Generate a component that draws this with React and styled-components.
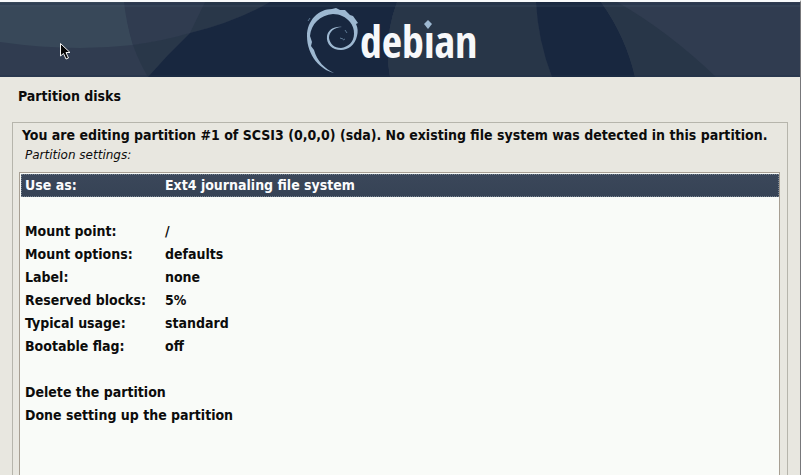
import React, { useState } from "react";
import styled, { createGlobalStyle } from "styled-components";

const GlobalStyle = createGlobalStyle`
  *, *::before, *::after { box-sizing: border-box; }
  body {
    margin: 0;
    overflow: hidden;
    background: #e8e7e0;
    color: #0c0c0c;
    font: 14px/23px "DejaVu Sans Condensed", "DejaVu Sans", sans-serif;
  }
`;

const Page = styled.main`
  display: flex;
  flex-direction: column;
  height: 100vh;
  border-top: 2px solid #f8fafb;
  border-right: 1px solid #77777a;
`;

const Banner = styled.header`
  flex: none;
  height: 75px;
  background: #2f3b4e;
  overflow: hidden;
`;

const BannerArt = styled.svg`
  display: block;
  width: 100%;
  height: 100%;
`;

const Wordmark = styled.text`
  font: bold 44px "Open Sans Condensed", "Roboto Condensed", Lato, sans-serif;
  fill: #f7f8fa;
`;

const Title = styled.h1`
  flex: none;
  margin: 0;
  padding: 8px 18px 14px;
  font-size: 14px;
  line-height: 23px;
`;

const Panel = styled.section`
  flex: 1;
  min-height: 0;
  display: flex;
  flex-direction: column;
  margin: 0 12px;
  padding: 2px 7px 0 6px;
  border: 1px solid #b6b5ac;
  border-bottom: 0;
`;

const Message = styled.h2`
  margin: 0 3px;
  font-size: 14px;
  line-height: 21px;
  white-space: nowrap;
`;

const ListLabel = styled.p`
  margin: 0 6px 8px;
  font-family: "DejaVu Sans", sans-serif;
  font-style: italic;
  font-size: 12px;
  line-height: 18px;
`;

const SettingsList = styled.div`
  flex: 1;
  min-height: 0;
  overflow: hidden;
  padding: 1px 0 0 1px;
  background: #f9fbf8;
  border: 1px solid #a79f93;
  border-bottom: 0;
`;

const SettingRow = styled.button`
  display: grid;
  grid-template-columns: ${({ $wide }) => ($wide ? "1fr" : "140px 1fr")};
  align-items: center;
  width: 100%;
  height: 23px;
  padding: 0 4px;
  border: 0;
  background: ${({ $selected }) =>
    $selected ? "linear-gradient(#3b475a, #364355)" : "transparent"};
  color: ${({ $selected }) => ($selected ? "#fbfcfd" : "#0c0c0c")};
  outline: ${({ $selected }) => ($selected ? "1px dotted #76828f" : "none")};
  outline-offset: -1px;
  font: bold 14px/23px "DejaVu Sans Condensed", "DejaVu Sans", sans-serif;
  text-align: left;
  white-space: nowrap;
`;

const Spacer = styled.div`
  height: 23px;
`;

const rows = [
  { name: "Use as:", value: "Ext4 journaling file system" },
  null,
  { name: "Mount point:", value: "/" },
  { name: "Mount options:", value: "defaults" },
  { name: "Label:", value: "none" },
  { name: "Reserved blocks:", value: "5%" },
  { name: "Typical usage:", value: "standard" },
  { name: "Bootable flag:", value: "off" },
  null,
  { name: "Delete the partition" },
  { name: "Done setting up the partition" },
];

function DebianBanner() {
  return (
    <BannerArt viewBox="0 0 800 75" preserveAspectRatio="xMidYMid slice" role="img" aria-label="debian">
      <rect width="800" height="75" fill="#303c50" />
      <path d="M0 0H126Q126 20 133 43Q70 50 0 40Z" fill="#384859" />
      <path d="M124 0H270Q235 20 190 31Q163 39 133 43Q126 20 124 0Z" fill="#303c50" />
      <path d="M205 0H270Q235 20 190 31Z" fill="#293749" />
      <path d="M133 43Q163 39 190 31Q168 52 148 75Q139 60 133 43Z" fill="#293749" />
      <path d="M148 75Q168 52 190 31Q235 20 270 0H397Q383 38 390 75Z" fill="#18273f" />
      <path d="M397 0H536Q538 39 552 75H390Q383 38 397 0Z" fill="#283648" />
      <path d="M536 0H601Q626 35 635 75H552Q538 39 536 0Z" fill="#18273f" />
      <path d="M601 0H617Q668 29 716 75H635Q626 35 601 0Z" fill="#283648" />
      <path d="M0 2H800M0 74H800" stroke="#20334d" strokeWidth="1" opacity=".65" />
      <path d="M0 4H800" stroke="#495a70" strokeWidth="1" opacity=".4" />
      <path
        d="M334 71C321 68 307 54 307 34C307 18 319 7 332 7L336 6L340 8L345 8L350 13L353 14L358 21L356 22C358 26 358 30 357 34C355 43 348 48 341 48C332 48 326 42 327 34C328 28 334 24 342 25C334 25 329 30 329 36C330 42 334 46 341 46C348 45 354 40 354 32C354 27 353 24 350 20C346 15 340 12 333 12C320 13 311 22 310 34L312 40L311 44L314 48C317 59 325 67 334 71Z"
        fill="#9db8d1"
      />
      <path d="M340 36l3 1M343 38l2-1M345 28l2 3M310 16l-2 3" stroke="#5c7893" strokeWidth="1" />
      <Wordmark x="360" y="56">debian</Wordmark>
      <rect x="423" y="17" width="11" height="12" fill="#283648" />
      <path d="M428 18l4 4l-4 5l-4-5Z" fill="#9db8d1" />
      <path d="M60.500 41.500V54L63.500 51.500L66 57L68.500 56L66 50.500H70Z" fill="#050505" stroke="#f2f2f2" strokeWidth="1" />
    </BannerArt>
  );
}

export default function App() {
  const [selected, setSelected] = useState(0);
  return (
    <>
      <GlobalStyle />
      <Page>
        <Banner>
          <DebianBanner />
        </Banner>
        <Title>Partition disks</Title>
        <Panel>
          <Message>
            You are editing partition #1 of SCSI3 (0,0,0) (sda). No existing file system was detected in this partition.
          </Message>
          <ListLabel id="settings-label">Partition settings:</ListLabel>
          <SettingsList role="group" aria-labelledby="settings-label">
            {rows.map((row, index) =>
              row ? (
                <SettingRow
                  key={row.name}
                  type="button"
                  aria-pressed={selected === index}
                  $selected={selected === index}
                  $wide={!row.value}
                  onClick={() => setSelected(index)}
                >
                  <span>{row.name}</span>
                  {row.value && <span>{row.value}</span>}
                </SettingRow>
              ) : (
                <Spacer key={index} />
              )
            )}
          </SettingsList>
        </Panel>
      </Page>
    </>
  );
}
